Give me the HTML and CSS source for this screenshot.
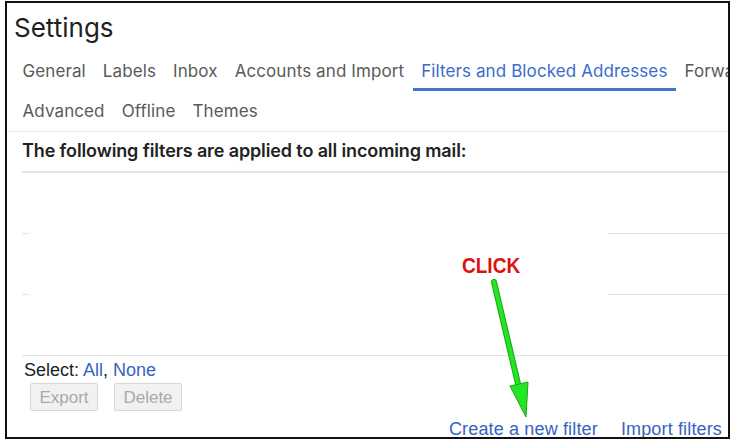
FILE: index.html
```html
<!DOCTYPE html>
<html lang="en">
<head>
<meta charset="utf-8">
<title>Settings</title>
<link rel="stylesheet" href="styles.css">
</head>
<body>
<div class="frame">
  <h1 class="title">Settings</h1>
  <nav class="tabs">
    <div class="tab-row">
      <a class="tab">General</a>
      <a class="tab">Labels</a>
      <a class="tab">Inbox</a>
      <a class="tab">Accounts and Import</a>
      <a class="tab active">Filters and Blocked Addresses</a>
      <a class="tab">Forwarding and POP/IMAP</a>
    </div>
    <div class="tab-row">
      <a class="tab">Advanced</a>
      <a class="tab">Offline</a>
      <a class="tab">Themes</a>
    </div>
  </nav>
  <section class="filters">
    <h2 class="filters-head">The following filters are applied to all incoming mail:</h2>
    <div class="filter-list">
      <div class="filter-row"></div>
      <div class="filter-row"></div>
      <div class="filter-row"></div>
      <div class="redact"></div>
    </div>
    <div class="select">Select: <a class="link">All</a>, <a class="link">None</a></div>
    <div class="actions">
      <button class="btn" disabled>Export</button>
      <button class="btn" disabled>Delete</button>
    </div>
    <div class="bottom-links">
      <a class="link">Create a new filter</a>
      <a class="link">Import filters</a>
    </div>
  </section>
</div>
<div class="click-label">CLICK</div>
<svg class="arrow" width="731" height="439" viewBox="0 0 731 439" aria-hidden="true">
  <line x1="494" y1="282" x2="519" y2="388" stroke="#1aa51a" stroke-width="6" stroke-linecap="round"/>
  <line x1="494" y1="282" x2="519" y2="388" stroke="#22e622" stroke-width="4" stroke-linecap="round"/>
  <polygon points="510,386 528,382 526,417" fill="#22e622" stroke="#1aa51a" stroke-width="1"/>
</svg>
</body>
</html>
```

FILE: styles.css
```css
html, body {
  margin: 0;
  padding: 0;
  background: #fff;
}
body {
  position: relative;
  width: 731px;
  height: 439px;
  overflow: hidden;
}
.frame {
  box-sizing: border-box;
  margin: 1px 0 0 5px;
  width: 725px;
  height: 438px;
  border: 2px solid #111;
  overflow: hidden;
  position: relative;
  background: #fff;
}
.title {
  margin: 0;
  padding: 10px 0 0 7px;
  font-family: Inter, Roboto, sans-serif;
  font-weight: 400;
  font-size: 26px;
  line-height: 30px;
  color: #1f1f1f;
}
.tabs {
  padding-top: 8px;
  border-bottom: 1px solid #e6e6e6;
}
.tab-row {
  display: flex;
  flex-wrap: nowrap;
  padding-left: 7px;
  white-space: nowrap;
}
.tab {
  display: block;
  padding: 10px 8.5px 7px;
  border-bottom: 3px solid transparent;
  font-family: Inter, Roboto, sans-serif;
  font-size: 17px;
  line-height: 20px;
  letter-spacing: 0.1px;
  color: #5a5a5a;
}
.tab.active {
  color: #3a6ccc;
  border-bottom-color: #4178cf;
}
.filters {
  padding-left: 15px;
}
.filters-head {
  margin: 8px 0 0;
  padding-bottom: 9px;
  border-bottom: 2px solid #e4e4e4;
  font-family: Inter, Roboto, sans-serif;
  font-weight: 600;
  font-size: 18px;
  line-height: 22px;
  letter-spacing: -0.12px;
  color: #222;
}
.filter-list {
  position: relative;
}
.filter-row {
  height: 60px;
  border-bottom: 1px solid #e4e4e4;
}
.redact {
  position: absolute;
  left: 7px;
  top: 2px;
  width: 579px;
  height: 175px;
  background: #fff;
}
.select {
  margin-top: 4px;
  padding-left: 2px;
  font-family: "Liberation Sans", Arial, sans-serif;
  font-size: 18px;
  line-height: 20px;
  color: #222;
}
.link {
  color: #3563c4;
  text-decoration: none;
}
.actions {
  display: flex;
  gap: 16px;
  margin-top: 3px;
  padding-left: 8px;
}
.btn {
  box-sizing: border-box;
  width: 68px;
  height: 28px;
  padding: 0;
  border: 1px solid #d8d8d8;
  border-radius: 2px;
  background: #f1f1f1;
  font-family: "Liberation Sans", Arial, sans-serif;
  font-size: 17px;
  line-height: 19px;
  color: #a9a9a9;
}
.bottom-links {
  display: flex;
  justify-content: flex-end;
  gap: 23px;
  margin-top: 8px;
  padding-right: 6px;
  font-family: "Liberation Sans", Arial, sans-serif;
  font-size: 18px;
  line-height: 20px;
  letter-spacing: 0.15px;
  white-space: nowrap;
}
.click-label {
  position: absolute;
  left: 462px;
  top: 255px;
  font-family: "Liberation Sans", Arial, sans-serif;
  font-weight: 700;
  font-size: 22px;
  line-height: 22px;
  color: #dd1111;
  transform: scaleX(0.865);
  transform-origin: left top;
}
.arrow {
  position: absolute;
  left: 0;
  top: 0;
  pointer-events: none;
}
```
